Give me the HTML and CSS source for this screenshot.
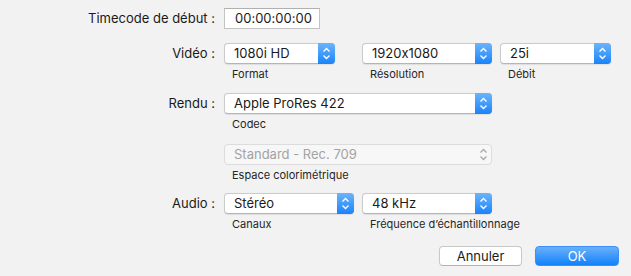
FILE: index.html
```html
<!DOCTYPE html>
<html lang="fr">
<head>
    <meta charset="UTF-8">
    <title>Réglages du projet</title>
    <link rel="stylesheet" href="styles.css">
</head>
<body>
    <form class="sheet">
        <!-- Timecode -->
        <div class="row row-timecode">
            <label class="row-label">Timecode de début :</label>
            <div class="fields">
                <div class="textfield">00:00:00:00</div>
            </div>
        </div>

        <!-- Video -->
        <div class="row row-video">
            <label class="row-label">Vidéo :</label>
            <div class="fields">
                <div class="field w-format">
                    <div class="popup">1080i HD<span class="arrows"></span></div>
                    <span class="caption">Format</span>
                </div>
                <div class="field w-resolution">
                    <div class="popup">1920x1080<span class="arrows"></span></div>
                    <span class="caption">Résolution</span>
                </div>
                <div class="field w-rate">
                    <div class="popup">25i<span class="arrows"></span></div>
                    <span class="caption">Débit</span>
                </div>
            </div>
        </div>

        <!-- Render -->
        <div class="row">
            <label class="row-label">Rendu :</label>
            <div class="fields">
                <div class="field w-wide">
                    <div class="popup">Apple ProRes 422<span class="arrows"></span></div>
                    <span class="caption">Codec</span>
                </div>
            </div>
        </div>

        <div class="row row-color">
            <span class="row-label"></span>
            <div class="fields">
                <div class="field w-wide">
                    <div class="popup disabled">Standard - Rec. 709<span class="arrows"></span></div>
                    <span class="caption">Espace colorimétrique</span>
                </div>
            </div>
        </div>

        <!-- Audio -->
        <div class="row row-audio">
            <label class="row-label">Audio :</label>
            <div class="fields">
                <div class="field w-channels">
                    <div class="popup">Stéréo<span class="arrows"></span></div>
                    <span class="caption">Canaux</span>
                </div>
                <div class="field w-sample">
                    <div class="popup">48 kHz<span class="arrows"></span></div>
                    <span class="caption">Fréquence d’échantillonnage</span>
                </div>
            </div>
        </div>

        <!-- Dialog buttons -->
        <div class="actions">
            <button type="button" class="btn">Annuler</button>
            <button type="button" class="btn btn-default">OK</button>
        </div>
    </form>
</body>
</html>
```

FILE: styles.css
```css
/* Page */
body {
    margin: 0;
    background-color: #f2f2f2;
    font-family: Inter, "Noto Sans", sans-serif;
    font-feature-settings: "calt" 0;
    font-size: 13px;
    color: #1a1a1a;
}

.sheet {
    width: 631px;
    height: 276px;
    padding-top: 8px;
    box-sizing: border-box;
    display: flex;
    flex-direction: column;
    gap: 12px;
}

/* A labelled row: label column, then the controls */
.row {
    display: grid;
    grid-template-columns: 215px 1fr;
    column-gap: 9px;
    align-items: start;
}

.row-video { margin-top: 2px; }
.row-color { margin-top: 1px; }
.row-audio { margin-top: -1px; }

.row-label {
    text-align: right;
    line-height: 21px;
}

.fields {
    display: flex;
    gap: 8px;
}

.field {
    display: flex;
    flex-direction: column;
}

.w-format { width: 111px; margin-right: 19px; }
.w-resolution { width: 130px; }
.w-rate { width: 111px; }
.w-wide { width: 268px; }
.w-channels { width: 130px; }
.w-sample { width: 130px; }

.caption {
    font-size: 11px;
    line-height: 14px;
    margin-top: 3px;
    padding-left: 8px;
    color: #262626;
    white-space: nowrap;
}

/* Text field */
.textfield {
    width: 96px;
    height: 21px;
    box-sizing: border-box;
    background: #fff;
    border: 1px solid #c4c4c4;
    border-top-color: #b0b0b0;
    padding-left: 10px;
    line-height: 19px;
}

/* Pop-up buttons */
.popup {
    position: relative;
    height: 21px;
    box-sizing: border-box;
    background: #fff;
    border: 1px solid #cbcbcb;
    border-bottom-color: #b5b5b5;
    border-radius: 4px;
    box-shadow: 0 0.5px 1px rgba(0, 0, 0, 0.08);
    padding-left: 9px;
    line-height: 19px;
    white-space: nowrap;
}

.arrows {
    position: absolute;
    top: -1px;
    right: -1px;
    bottom: -1px;
    width: 17px;
    border-radius: 0 4px 4px 0;
    background-image:
        url("data:image/svg+xml;utf8,<svg xmlns='http://www.w3.org/2000/svg' width='17' height='21'><path d='M5.5 8.5 L8.5 5.5 L11.5 8.5 M5.5 12.5 L8.5 15.5 L11.5 12.5' fill='none' stroke='white' stroke-width='1.4'/></svg>"),
        linear-gradient(#6cb4fb, #1a83fb);
}

.popup.disabled {
    background: #f7f7f7;
    border-color: #dcdcdc;
    color: #a3a3a3;
    box-shadow: none;
}

.popup.disabled .arrows {
    background: url("data:image/svg+xml;utf8,<svg xmlns='http://www.w3.org/2000/svg' width='17' height='21'><path d='M5.5 8.5 L8.5 5.5 L11.5 8.5 M5.5 12.5 L8.5 15.5 L11.5 12.5' fill='none' stroke='%23a8a8a8' stroke-width='1.3'/></svg>");
}

/* Dialog buttons */
.actions {
    display: flex;
    justify-content: flex-end;
    gap: 13px;
    padding-right: 12px;
    margin-top: 3px;
}

.btn {
    width: 83px;
    height: 20px;
    font-family: inherit;
    font-feature-settings: inherit;
    font-size: 13px;
    color: #1a1a1a;
    background: #fff;
    border: 1px solid #c8c8c8;
    border-bottom-color: #b3b3b3;
    border-radius: 4px;
    padding: 0;
    line-height: 18px;
}

.btn-default {
    width: 84px;
    color: #fff;
    border-color: #3d8ff8;
    background: linear-gradient(#69b1fa, #1281fb);
}
```
